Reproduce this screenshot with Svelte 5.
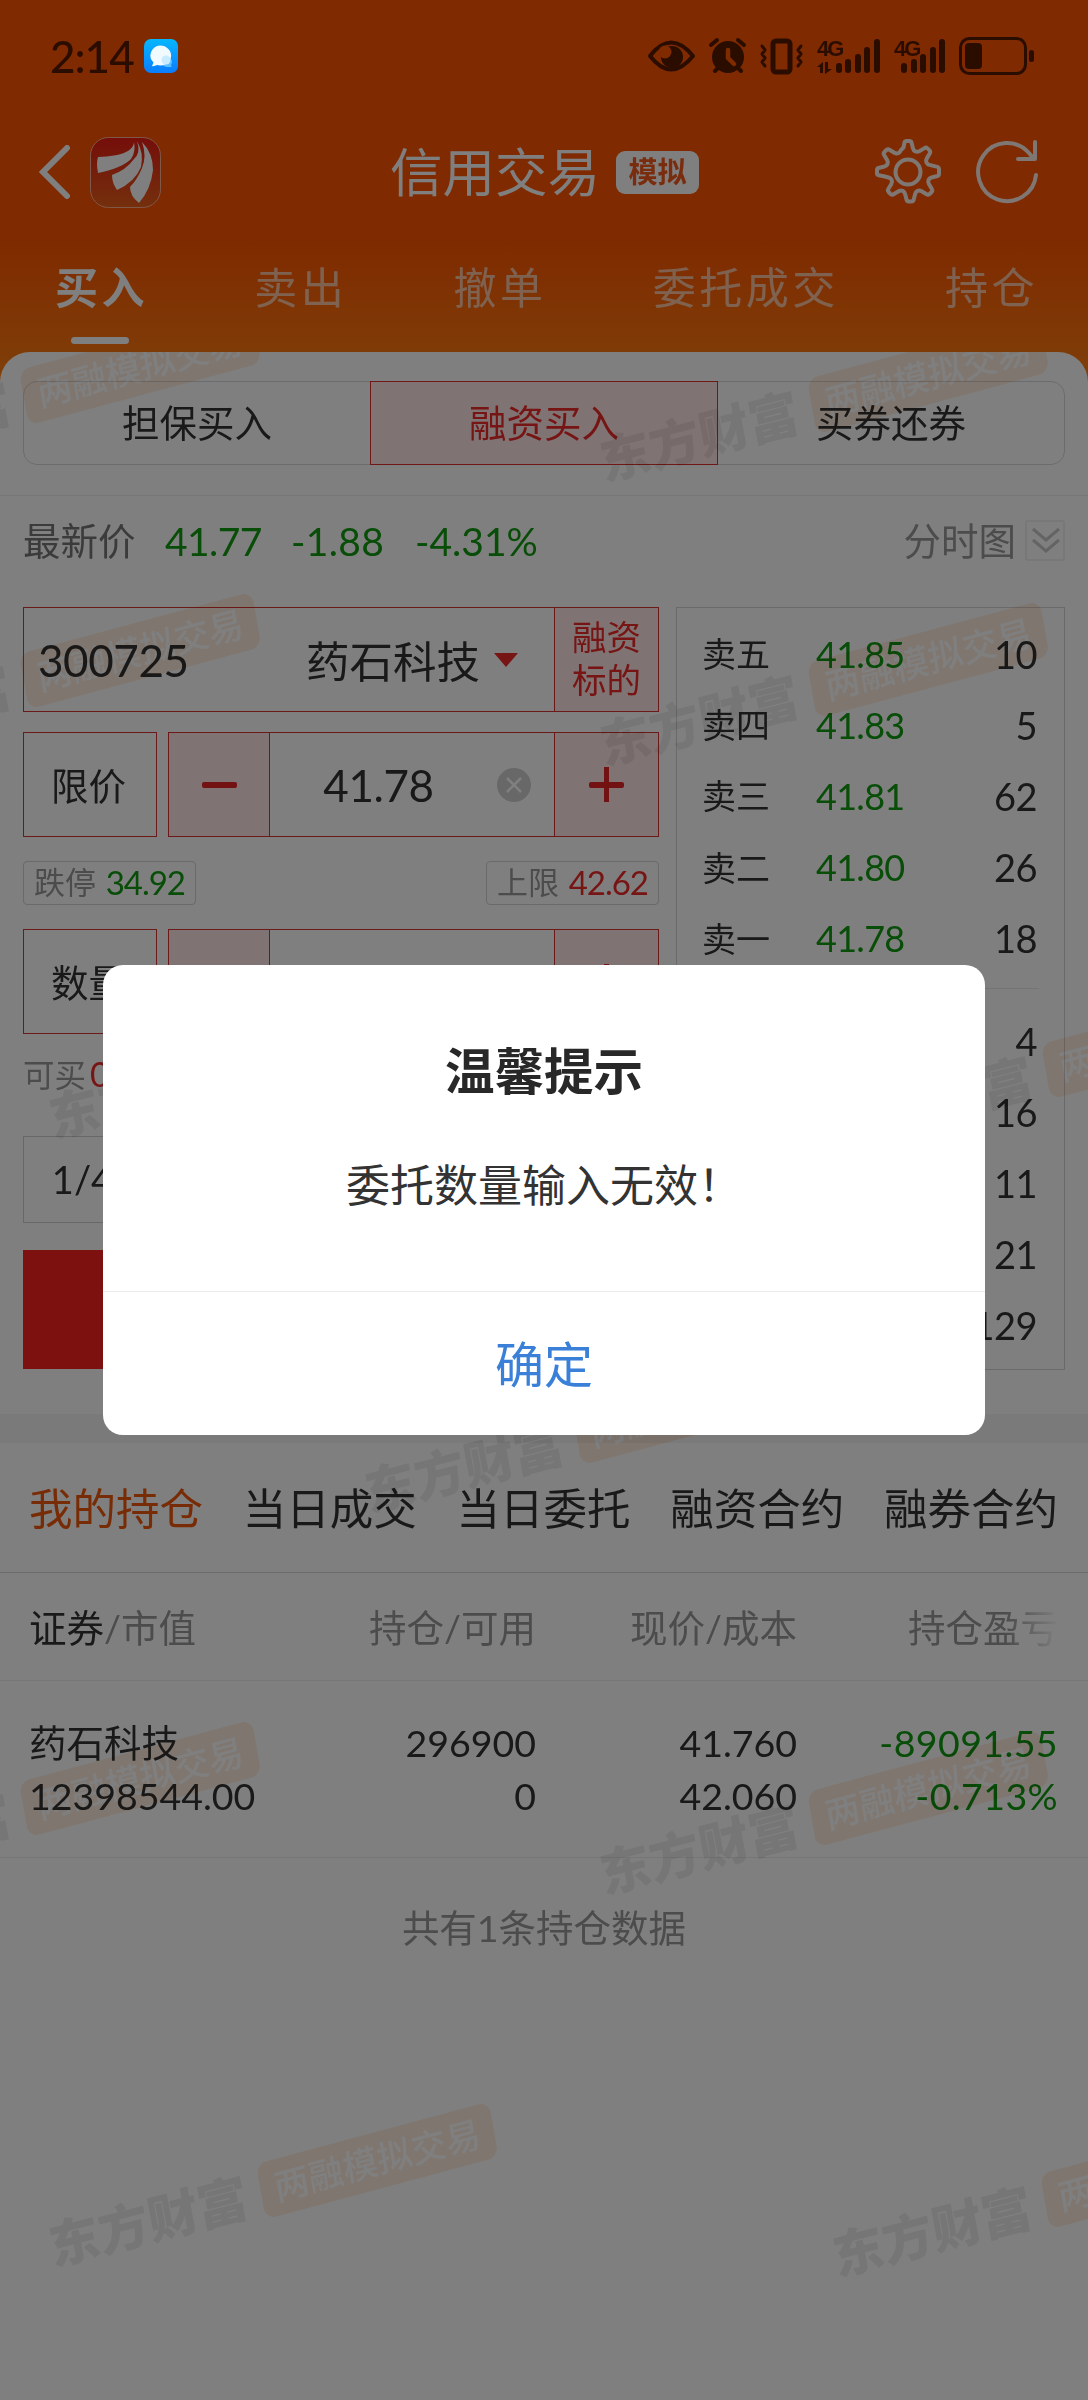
<script lang="ts">
  type Level = { label?: string; price?: string; volume: string };

  const tabs = ['买入', '卖出', '撤单', '委托成交', '持仓'];
  const modes = ['担保买入', '融资买入', '买券还券'];
  const listTabs = ['我的持仓', '当日成交', '当日委托', '融资合约', '融券合约'];

  let activeTab = '买入';
  let activeMode = '融资买入';
  let activeList = '我的持仓';
  let showDialog = true;

  const asks: Level[] = [
    { label: '卖五', price: '41.85', volume: '10' },
    { label: '卖四', price: '41.83', volume: '5' },
    { label: '卖三', price: '41.81', volume: '62' },
    { label: '卖二', price: '41.80', volume: '26' },
    { label: '卖一', price: '41.78', volume: '18' }
  ];
  const bids: Level[] = [
    { volume: '4' },
    { volume: '16' },
    { volume: '11' },
    { volume: '21' },
    { volume: '129' }
  ];

  // signal bars: [x, top]
  const signalA = [[199, 63], [208, 59], [218, 54], [227, 47], [237, 39]];
  const signalB = [[264, 63], [274, 59], [283, 54], [293, 47], [302, 39]];

  // top-left corner of every watermark
  const watermarks = [
    [-187, -42], [601, -33],
    [-187, 242], [601, 251],
    [50, 624], [835, 632],
    [366, 998],
    [-187, 1370], [601, 1380],
    [50, 1752], [834, 1762]
  ];
</script>

<div class="screen">
  <header>
    <div class="status">
      <span class="time">2:14</span>
      <svg class="chat" viewBox="0 0 34 34">
        <defs>
          <linearGradient id="chatBg" x1="0" y1="0" x2="0" y2="1">
            <stop offset="0" stop-color="#06b6ff" />
            <stop offset="1" stop-color="#0a7dff" />
          </linearGradient>
        </defs>
        <rect width="34" height="34" rx="7" fill="url(#chatBg)" />
        <circle cx="23" cy="23" r="5" fill="#5cc0ff" />
        <path d="M25 24l3 4h-6z" fill="#5cc0ff" />
        <path d="M16 6.500a11 10 0 1 1-3 19.600q-2 1.200-5 1l1.500-3.600A10.500 10 0 0 1 16 6.500z" fill="#f0faff" />
        <circle cx="22" cy="21" r="4.500" fill="#c9ebff" />
      </svg>
      <svg class="status-icons" viewBox="640 34 400 44">
        <g fill="none" stroke="#2b0d00" stroke-width="4" stroke-linejoin="round" stroke-linecap="round">
          <path d="M650 56q21-27 43 0q-22 27-43 0z" />
          <path d="M711 45l6-5M744 45l-6-5M715 71l5-5M741 71l-5-5" />
          <rect x="773" y="41" width="17" height="31" rx="3" stroke-width="5" />
          <path d="M762 46l3 4-3 4 3 4-3 4 3 4M801 46l-3 4 3 4-3 4 3 4-3 4" stroke-width="3" />
          <rect x="960.500" y="38.500" width="65" height="35" rx="9" stroke-width="3" />
        </g>
        <g fill="#2b0d00">
          <circle cx="672" cy="57" r="11" />
          <circle cx="728" cy="57" r="16" />
          <rect x="965" y="43" width="17" height="26" rx="4" />
          <rect x="1029" y="50" width="5" height="12" rx="2.500" />
          <path d="M817 67l6-5v11h-3v-6zM825 62h3v7h4l-7 5z" />
          <text x="817" y="56" class="net">4G</text>
          <text x="894" y="56" class="net">4G</text>
          {#each [...signalA, ...signalB] as [x, top]}
            <rect x={x + 637} y={top} width="6" height={73 - top} rx="3" />
          {/each}
        </g>
        <circle cx="665" cy="52" r="6.500" fill="#802a00" />
        <path d="M728 50v8l6 6" fill="none" stroke="#802a00" stroke-width="4.500" stroke-linecap="round" />
      </svg>
    </div>

    <div class="titlebar">
      <svg class="back" viewBox="0 0 32 54"><path d="M28 3L4 27l24 24" /></svg>
      <svg class="logo" viewBox="0 0 71 71">
        <defs>
          <linearGradient id="logoBg" x1="0" y1="0" x2="0" y2="1">
            <stop offset="0" stop-color="#ea1c14" />
            <stop offset="1" stop-color="#e8601a" />
          </linearGradient>
        </defs>
        <rect x=".5" y=".5" width="70" height="70" rx="18" fill="url(#logoBg)" stroke="#ffb090" />
        <path d="M44 5C43 14 33 19 8 20q-2 6 0 16q24-5 33-14q5-7 3-17z" fill="#fff" />
        <path d="M47 4q4 12-3 18Q36 33 22 38q0 8 5 15Q45 45 51 30Q54 16 47 4z" fill="#fff" />
        <path d="M52 5q5 14 0 26q-5 12-12 19q0 9 9 16Q61 52 63 33Q63 16 52 5z" fill="#fff" />
      </svg>
      <div class="title">
        <h1>信用交易</h1>
        <span class="sim">模拟</span>
      </div>
      <svg class="gear" viewBox="0 0 66 66">
        <circle cx="33" cy="33" r="12.500" />
        <path d="M28.500 8.500L29.500 3.500Q30 2 31.500 2h3Q36 2 36.500 3.500l1.500 6q.5 2 2.500 3q2 .8 4-.4l5-3q1.500-1 3 .3l2 2q1.300 1.500.3 3l-3 5q-1.200 2-.4 4q1 2 3 2.500l6 1.500Q64 28 64 30v5q0 1.500-1.500 2l-6 1.500q-2 .5-3 2.500q-.8 2 .4 4l3 5q1 1.500-.3 3l-2 2q-1.500 1.300-3 .3l-5-3q-2-1.200-4-.4q-2 1-2.500 3l-1.500 6q-.5 1.500-2 1.500h-3q-1.500 0-2-1.500l-1.500-6q-.5-2-2.500-3q-2-.8-4 .4l-5 3q-1.500 1-3-.3l-2-2q-1.300-1.500-.3-3l3-5q1.200-2 .4-4q-1-2-3-2.500l-6-1.500Q2 36.500 2 35v-4q0-1.500 1.500-2l6-1.500q2-.5 3-2.500q.8-2-.4-4l-3-5q-1-1.500.3-3l2-2q1.500-1.300 3-.3l5 3q2 1.200 4 .4q2-1 2.500-3z" />
      </svg>
      <svg class="refresh" viewBox="0 0 62 64">
        <path d="M60 35A29 29 0 1 1 53 13L58 19M59 2v17H42" />
      </svg>
    </div>

    <nav class="tabs">
      {#each tabs as tab}
        <button class:active={tab === activeTab} on:click={() => (activeTab = tab)}>{tab}</button>
      {/each}
    </nav>
  </header>

  <main>
    <div class="modes">
      {#each modes as mode}
        <button class:active={mode === activeMode} on:click={() => (activeMode = mode)}>{mode}</button>
      {/each}
    </div>

    <div class="quote">
      <span class="quote-label">最新价</span>
      <span class="down q1">41.77</span>
      <span class="down q2">-1.88</span>
      <span class="down q3">-4.31%</span>
      <span class="chart-link">分时图</span>
      <svg class="expand" viewBox="0 0 40 41">
        <rect x="1" y="1" width="38" height="39" rx="2" />
        <path d="M8 9l13 11L34 9M8 20l13 11l13-11" />
      </svg>
    </div>

    <div class="trade">
      <div class="form">
        <div class="box stock">
          <span class="code">300725</span>
          <span class="name">药石科技</span>
          <i class="caret"></i>
          <span class="target">融资<br />标的</span>
        </div>

        <div class="line">
          <div class="box kind">限价</div>
          <div class="box stepper">
            <span class="step"><i class="minus"></i></span>
            <span class="value">41.78</span>
            <svg class="clear" viewBox="0 0 34 34"><circle cx="17" cy="17" r="17" /><path d="M10 10l14 14M24 10L10 24" /></svg>
            <span class="step right"><i class="minus plus"></i></span>
          </div>
        </div>

        <div class="limits">
          <span class="limit">跌停 <b class="down">34.92</b></span>
          <span class="limit">上限 <b class="up">42.62</b></span>
        </div>

        <div class="line">
          <div class="box kind">数量</div>
          <div class="box stepper">
            <span class="step"><i class="minus"></i></span>
            <span class="value"></span>
            <svg class="clear" viewBox="0 0 34 34"><circle cx="17" cy="17" r="17" /><path d="M10 10l14 14M24 10L10 24" /></svg>
            <span class="step right"><i class="minus plus"></i></span>
          </div>
        </div>

        <div class="available">可买<span class="up">0</span></div>
        <div class="portion">1/4</div>
        <div class="submit"></div>
      </div>

      <div class="book">
        {#each asks as level}
          <div class="level">
            <span class="level-label">{level.label}</span>
            <span class="level-price">{level.price}</span>
            <span class="level-volume">{level.volume}</span>
          </div>
        {/each}
        <hr />
        {#each bids as level}
          <div class="level">
            <span class="level-volume">{level.volume}</span>
          </div>
        {/each}
      </div>
    </div>

    <div class="band"></div>

    <nav class="list-tabs">
      {#each listTabs as tab}
        <button class:active={tab === activeList} on:click={() => (activeList = tab)}>{tab}</button>
      {/each}
    </nav>

    <div class="grid head">
      <span><em>证券</em>/市值</span>
      <span>持仓/可用</span>
      <span>现价/成本</span>
      <span class="fade">持仓盈亏</span>
    </div>
    <div class="grid row">
      <span>药石科技<br />12398544.00</span>
      <span>296900<br />0</span>
      <span>41.760<br />42.060</span>
      <span class="down">-89091.55<br />-0.713%</span>
    </div>
    <p class="total">共有1条持仓数据</p>

    <svg class="marks" viewBox="0 0 1088 2048">
      {#each watermarks as [x, y]}
        <g transform="translate({x} {y})">
          <text class="brand" transform="translate(3 162) rotate(-14.5) skewX(-4)">东方财富</text>
          <g transform="translate(206 60) rotate(-15) skewX(-5)">
            <rect width="241" height="56" rx="11" fill="#ffecde" />
            <text class="tag" x="14" y="41">两融模拟交易</text>
          </g>
        </g>
      {/each}
    </svg>
  </main>

  {#if showDialog}
    <div class="mask">
      <div class="dialog">
        <h2>温馨提示</h2>
        <p>委托数量输入无效！</p>
        <button on:click={() => (showDialog = false)}>确定</button>
      </div>
    </div>
  {/if}
</div>

<style>
  :global(body) {
    margin: 0;
  }

  .screen {
    position: relative;
    width: 1088px;
    height: 2400px;
    overflow: hidden;
    background: linear-gradient(#ff5400 0, #ff5400 235px, #ff7a10 365px);
    font-family: Lato, 'Noto Sans CJK SC', sans-serif;
    color: #333;
  }

  .screen * {
    box-sizing: border-box;
  }

  button {
    padding: 0;
    border: 0;
    background: none;
    font: inherit;
    color: inherit;
    white-space: nowrap;
  }

  svg {
    flex: none;
    display: block;
  }

  .down {
    color: #109a10;
  }

  .up {
    color: #ee2a2a;
  }

  header {
    height: 352px;
  }

  /* the system bar stays above the dimming mask */
  .status {
    position: relative;
    z-index: 2;
    display: flex;
    align-items: center;
    height: 112px;
    padding-left: 50px;
  }

  .time {
    width: 94px;
    font-size: 44px;
    font-weight: 500;
    line-height: 112px;
    letter-spacing: -1px;
    color: #2b0d00;
  }

  .chat {
    width: 34px;
    height: 34px;
  }

  .status-icons {
    width: 400px;
    height: 44px;
    margin-left: 462px;
  }

  .net {
    font: 700 22px 'Liberation Sans', sans-serif;
    letter-spacing: -2px;
  }

  .titlebar {
    display: flex;
    align-items: center;
    height: 120px;
    padding-left: 39px;
  }

  .back {
    width: 32px;
    height: 54px;
    fill: none;
    stroke: #fff;
    stroke-width: 6;
    stroke-linecap: round;
  }

  .logo {
    width: 71px;
    height: 71px;
    margin-left: 19px;
  }

  .title {
    display: flex;
    align-items: center;
    width: 485px;
    margin-left: 229px;
    color: #fff;
  }

  h1 {
    margin: 0 16px 0 0;
    font-size: 52.5px;
    font-weight: 400;
    line-height: 60px;
  }

  .sim {
    width: 83px;
    height: 43px;
    border-radius: 9px;
    background: #fff;
    color: #f25a1c;
    font-size: 29px;
    font-weight: 600;
    line-height: 42px;
    text-align: center;
  }

  .gear {
    width: 66px;
    height: 66px;
  }

  .refresh {
    width: 62px;
    height: 64px;
    margin-left: 35px;
  }

  .gear, .refresh {
    fill: none;
    stroke: #fff;
    stroke-opacity: .9;
    stroke-width: 4;
    stroke-linecap: round;
    stroke-linejoin: round;
  }

  .tabs {
    display: flex;
    justify-content: space-between;
    height: 120px;
    padding: 0 50px 0 55px;
  }

  .tabs button {
    display: flex;
    flex-direction: column;
    align-items: center;
    padding-top: 28px;
    font-size: 43px;
    line-height: 56px;
    letter-spacing: 3.5px;
    color: rgba(255, 255, 255, .62);
  }

  .tabs .active {
    color: #fff;
    font-weight: 700;
  }

  .tabs .active::after {
    content: '';
    width: 58px;
    height: 7px;
    margin-top: 21px;
    margin-right: 4px;
    border-radius: 4px;
    background: #fff;
  }

  main {
    position: relative;
    height: 2048px;
    padding-top: 29px;
    border-radius: 30px 30px 0 0;
    background: #fff;
    overflow: hidden;
  }

  .modes {
    display: flex;
    height: 84px;
    margin: 0 23px 30px;
    border: 1px solid #d8d8dc;
    border-radius: 14px;
  }

  .modes button {
    flex: 1;
    font-size: 37.5px;
    line-height: 80px;
  }

  .modes .active {
    margin: -1px 0;
    border: 1px solid #e03030;
    background: #ffe6e6;
    color: #ee2a2a;
  }

  .quote {
    display: flex;
    align-items: center;
    height: 112px;
    padding: 0 23px 22px;
    border-top: 1px solid #efefef;
    font-size: 37.5px;
    line-height: 48px;
  }

  .quote .down {
    font-size: 39px;
    letter-spacing: -.6px;
  }

  .quote-label {
    width: 142px;
    color: #777;
  }

  .quote .q1 {
    width: 126px;
  }

  .quote .q2 {
    width: 124px;
    letter-spacing: .3px;
  }

  .quote .q3 {
    letter-spacing: 0;
  }

  .chart-link {
    margin-left: auto;
    color: #999;
  }

  .expand {
    width: 40px;
    height: 41px;
    margin-left: 9px;
    fill: none;
    stroke: #c8c8c8;
    stroke-width: 3;
  }

  .expand rect {
    stroke: #f0f0f0;
    stroke-width: 2;
  }

  .trade {
    display: flex;
    justify-content: space-between;
    height: 763px;
    margin: 0 23px 44px;
  }

  .form {
    width: 636px;
  }

  .box {
    display: flex;
    align-items: center;
    height: 105px;
    border: 1px solid #d83232;
  }

  .stock {
    margin-bottom: 20px;
  }

  .code {
    width: 268px;
    padding-left: 14px;
    font-size: 44px;
    letter-spacing: -.4px;
  }

  .name {
    width: 188px;
    padding-left: 14px;
    font-size: 43.500px;
  }

  .caret {
    border: 12px solid transparent;
    border-top: 14px solid #ee2a2a;
    border-bottom: 0;
    margin-left: 14px;
  }

  .target {
    width: 104px;
    height: 103px;
    margin-left: auto;
    padding-top: 7px;
    border-left: 1px solid #d83232;
    background: #ffe6e6;
    color: #ee2a2a;
    font-size: 34.500px;
    line-height: 43px;
    text-align: center;
  }

  .line {
    display: flex;
    justify-content: space-between;
  }

  .kind {
    width: 134px;
    padding: 0 3px 3px 0;
    justify-content: center;
    font-size: 37.5px;
  }

  .stepper {
    width: 491px;
  }

  .step {
    display: flex;
    align-items: center;
    justify-content: center;
    width: 101px;
    height: 103px;
    border-right: 1px solid #d83232;
    background: #ffe6e6;
  }

  .step.right {
    width: 104px;
    margin-left: auto;
    border-right: 0;
    border-left: 1px solid #d83232;
  }

  .minus {
    width: 35px;
    height: 6px;
    border-radius: 2px;
    background: #e62424;
  }

  .plus::after {
    content: '';
    display: block;
    width: 5px;
    height: 35px;
    margin: -15px auto 0;
    background: #e62424;
  }

  .value {
    width: 214px;
    padding-left: 3px;
    text-align: center;
    font-size: 44px;
    letter-spacing: -.4px;
  }

  .clear {
    width: 34px;
    height: 34px;
    margin-left: 13px;
    fill: #d0d0d0;
    stroke: #fff;
    stroke-width: 2.5;
  }

  .clear circle {
    stroke: none;
  }

  .limits {
    display: flex;
    justify-content: space-between;
    padding: 24px 0;
  }

  .limit {
    display: flex;
    justify-content: space-between;
    width: 173px;
    height: 44px;
    padding: 0 10px;
    border: 1px solid #d4d4d4;
    border-radius: 4px;
    font-size: 31px;
    line-height: 40px;
    color: #999;
  }

  .limit b {
    font-size: 33px;
    font-weight: 400;
    letter-spacing: -1px;
  }

  .available {
    height: 102px;
    padding-top: 20px;
    font-size: 31.500px;
    line-height: 40px;
    color: #999;
  }

  .available span {
    margin-left: 4px;
    font-size: 34px;
  }

  .portion {
    width: 116px;
    height: 87px;
    padding-left: 3px;
    border: 1px solid #d0d0d0;
    font-size: 38px;
    line-height: 85px;
    text-align: center;
  }

  .submit {
    height: 119px;
    margin-top: 27px;
    background: #f8221e;
  }

  .book {
    width: 389px;
    padding: 10px 27px 0 25px;
    border: 1px solid #d4d4d8;
  }

  .level {
    display: flex;
    align-items: center;
    height: 71.200px;
    font-size: 34px;
  }

  .level-label {
    width: 114px;
    padding-bottom: 2px;
  }

  .level-price {
    color: #109a10;
    font-size: 36px;
    letter-spacing: -.7px;
  }

  .level-volume {
    margin-left: auto;
    font-size: 38px;
    letter-spacing: -.5px;
  }

  hr {
    height: 1px;
    margin: 14px -2px 16px;
    border: 0;
    background: #e8e8e8;
  }

  .band {
    height: 29px;
    background: #f4f4f4;
  }

  .list-tabs {
    display: flex;
    justify-content: space-between;
    height: 130px;
    padding: 0 30px 0 29px;
    border-bottom: 1px solid #d8d8d8;
    font-size: 43.500px;
    line-height: 128px;
  }

  .list-tabs .active {
    color: #f0580c;
  }

  .grid {
    display: grid;
    grid-template-columns: 277px 230px 261px 261px;
    padding: 0 30px 0 29px;
    border-bottom: 1px solid #ececec;
    font-size: 37.5px;
    text-align: right;
  }

  .grid span:first-child {
    text-align: left;
  }

  .head {
    height: 108px;
    line-height: 110px;
    color: #999;
  }

  .head em {
    font-style: normal;
    color: #333;
  }

  .fade {
    -webkit-mask-image: linear-gradient(90deg, #000 80%, transparent 101%);
    mask-image: linear-gradient(90deg, #000 80%, transparent 101%);
  }

  .row {
    height: 177px;
    padding-top: 35px;
    line-height: 53px;
    white-space: nowrap;
  }

  .row .down {
    letter-spacing: .4px;
  }

  .total {
    margin: 45px 0 0;
    font-size: 37.5px;
    line-height: 50px;
    text-align: center;
    color: #999;
  }

  .marks {
    position: absolute;
    top: 0;
    left: 0;
    width: 1088px;
    height: 2048px;
    mix-blend-mode: multiply;
    pointer-events: none;
  }

  .brand {
    font-size: 51px;
    font-weight: 900;
    fill: #ececec;
  }

  .tag {
    font-size: 35.500px;
    font-weight: 500;
    fill: #fff;
  }

  .mask {
    position: absolute;
    inset: 0;
    display: flex;
    align-items: center;
    justify-content: center;
    background: rgba(0, 0, 0, .5);
  }

  .dialog {
    display: flex;
    flex-direction: column;
    width: 882px;
    height: 470px;
    border-radius: 20px;
    background: #fff;
    text-align: center;
  }

  h2 {
    margin: 74px 0 0;
    font-size: 49.500px;
    line-height: 64px;
    color: #282828;
  }

  .dialog p {
    margin: 52px 0 0;
    font-size: 44px;
    line-height: 60px;
  }

  .dialog button {
    height: 144px;
    margin-top: auto;
    padding-bottom: 5px;
    border-top: 1px solid #ececec;
    font-size: 49px;
    color: #3a80d8;
  }
</style>
